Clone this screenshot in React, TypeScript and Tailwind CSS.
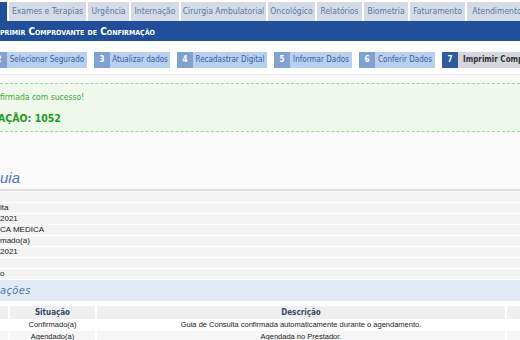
import React from "react";

const tahoma = "font-['DejaVu_Sans_Condensed','Liberation_Sans',sans-serif]";
const arial = "font-['Liberation_Sans',Arial,sans-serif]";

const tabs: [string, number][] = [
  ["Exames e Terapias", 77],
  ["Urgência", 41],
  ["Internação", 48],
  ["Cirurgia Ambulatorial", 85],
  ["Oncológico", 47],
  ["Relatórios", 45],
  ["Biometria", 44],
  ["Faturamento", 55],
  ["Atendimento", 60],
];

function Cut({ hidden, children }: { hidden: string; children: React.ReactNode }) {
  return (
    <span className="flex whitespace-nowrap">
      <span className="flex w-0 justify-end">
        <span className="shrink-0">{hidden}</span>
      </span>
      <span className="shrink-0">{children}</span>
    </span>
  );
}

function Step({ n, label, w, active, first }: { n: number; label: string; w: number; active?: boolean; first?: boolean }) {
  return (
    <div className={`flex h-[16px] shrink-0 ${first ? "-ml-[9px]" : ""}`}>
      <div
        className={`flex w-[16px] items-center justify-center text-[8px] font-bold text-white ${
          active ? "bg-[#2d5d9f]" : "bg-[#7fa2d2]"
        }`}
      >
        {n}
      </div>
      <div
        style={{ width: w }}
        className={`flex items-center whitespace-nowrap text-[8px] ${
          active ? "justify-start pl-[5px] bg-[#d4d8de] font-bold text-[#333]" : "justify-center bg-[#b8d0ef] text-[#3b5d96]"
        }`}
      >
        {label}
      </div>
    </div>
  );
}

const rows: [string, string][] = [
  ["", ""],
  ["Consu", "lta"],
  ["15/06/", "2021"],
  ["CLINI", "CA MEDICA"],
  ["Confir", "mado(a)"],
  ["15/07/", "2021"],
  ["", ""],
  ["Nã", "o"],
];

export default function App() {
  return (
    <div className={`relative h-[340px] w-[520px] overflow-hidden bg-white ${tahoma}`}>
      {/* tabs */}
      <div className="flex h-[21px] items-end gap-[2px]">
        <div className="h-[19px] w-[7px] shrink-0 bg-[#1e4f98]" />
        {tabs.map(([t, w]) => (
          <div
            key={t}
            style={{ width: w }}
            className="flex h-[19px] shrink-0 items-center justify-center whitespace-nowrap bg-[#d4dbe4] text-[8.5px] text-[#5a79a6]"
          >
            {t}
          </div>
        ))}
      </div>
      {/* title bar */}
      <div className="flex h-[20px] items-center bg-[#1e4f98] text-[10px] font-bold text-white [font-variant:small-caps]">
        <Cut hidden="Im">primir Comprovante de Confirmação</Cut>
      </div>
      {/* steps */}
      <div className="mt-[11px] flex gap-[7px]">
        <Step first n={2} label="Selecionar Segurado" w={80} />
        <Step n={3} label="Atualizar dados" w={60} />
        <Step n={4} label="Recadastrar Digital" w={74} />
        <Step n={5} label="Informar Dados" w={62} />
        <Step n={6} label="Conferir Dados" w={60} />
        <Step active n={7} label="Imprimir Comprovante" w={110} />
      </div>
      {/* content */}
      <div className="mt-[6px] border-t border-[#ececec] bg-[#fafafa] pt-[8px]">
        <div className="flex h-[49px] flex-col border-y border-dashed border-[#9fd49f] bg-[#eef9ec]">
          <div className="mt-[7px] flex h-[12px] items-center text-[8.5px] text-[#3aa83a]">
            <Cut hidden="Guia con">firmada com sucesso!</Cut>
          </div>
          <div className="mt-[8px] -ml-[2px] flex h-[16px] items-center text-[10.5px] font-bold text-[#1f9b1f]">
            <Cut hidden="NÚMERO DA CONFIRM">AÇÃO: 1052</Cut>
          </div>
        </div>
        <div className={`flex h-[57px] items-end pb-0 text-[15px] italic text-[#4b7bbd] ${arial}`}>
          <Cut hidden="Dados da G">uia</Cut>
        </div>
        <div className="border-t-2 border-[#dedede]" />
        <div className={`flex flex-col pt-[1px] ${arial}`}>
          {rows.map(([h, v], i) => (
            <div key={i} className="flex h-[11px] items-center border-b border-white bg-[#f3f3f3] text-[8px] text-[#222]">
              {v ? <Cut hidden={h}>{v}</Cut> : null}
            </div>
          ))}
        </div>
        <div className="flex h-[21px] items-center bg-[#e2ebf5] pt-[1px] text-[11px] italic tracking-[0.4px] text-[#4a79b5]">
          <Cut hidden="Moviment">ações</Cut>
        </div>
        <div className="bg-white pt-[5px]">
          <div className="grid grid-cols-[8px_85px_408px_1fr] gap-x-[2px]">
            <div className="h-[13px] bg-[#efefef]" />
            <div className="flex h-[13px] items-center justify-center bg-[#efefef] text-[8px] font-bold text-[#34496d]">Situação</div>
            <div className="flex h-[13px] items-center justify-center bg-[#efefef] text-[8px] font-bold text-[#34496d]">Descrição</div>
            <div className="h-[13px] bg-[#efefef]" />
          </div>
          <div className={`grid grid-cols-[8px_85px_408px_1fr] gap-x-[2px] text-[7.5px] text-[#222] ${arial}`}>
            <div className="h-[12px]" />
            <div className="flex h-[12px] items-center justify-center">Confirmado(a)</div>
            <div className="flex h-[12px] items-center justify-center">Guia de Consulta confirmada automaticamente durante o agendamento.</div>
            <div className="h-[12px]" />
            <div className="h-[11px] bg-[#f6f6f6]" />
            <div className="flex h-[11px] items-center justify-center bg-[#f6f6f6]">Agendado(a)</div>
            <div className="flex h-[11px] items-center justify-center bg-[#f6f6f6]">Agendada no Prestador.</div>
            <div className="h-[11px] bg-[#f6f6f6]" />
          </div>
        </div>
      </div>
    </div>
  );
}
